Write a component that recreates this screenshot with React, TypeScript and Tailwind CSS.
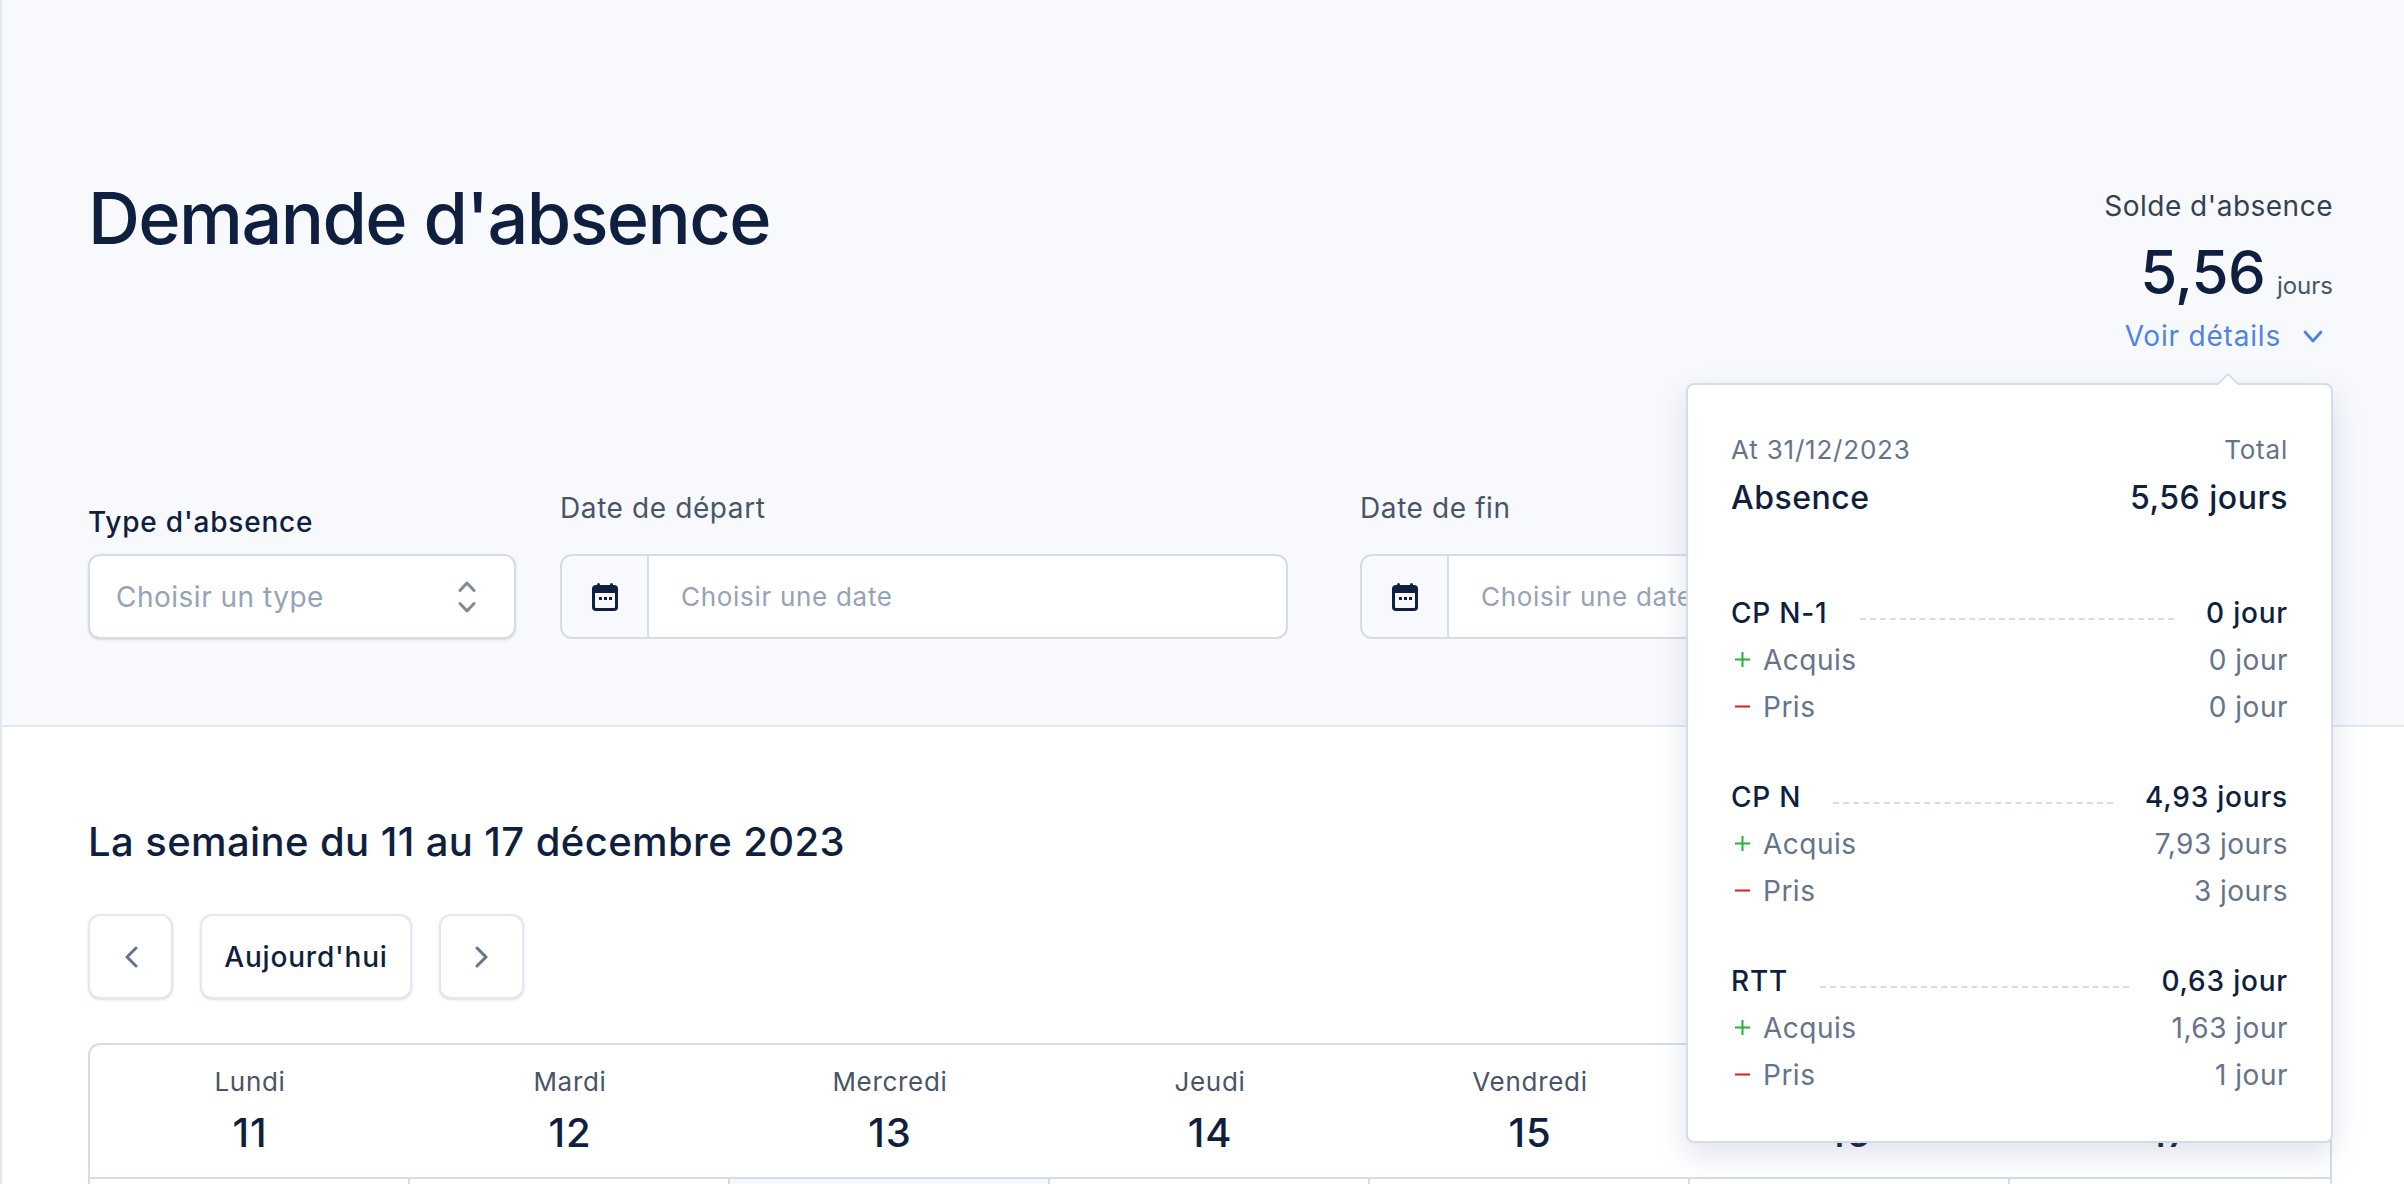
const days = [
    { name: "Lundi", num: 11 },
    { name: "Mardi", num: 12 },
    { name: "Mercredi", num: 13 },
    { name: "Jeudi", num: 14 },
    { name: "Vendredi", num: 15 },
    { name: "Samedi", num: 16 },
    { name: "Dimanche", num: 17 },
]

const balances = [
    { label: "CP N-1", total: "0 jour", acquis: "0 jour", pris: "0 jour" },
    { label: "CP N", total: "4,93 jours", acquis: "7,93 jours", pris: "3 jours" },
    { label: "RTT", total: "0,63 jour", acquis: "1,63 jour", pris: "1 jour" },
]

function CalendarIcon() {
    return (
        <svg width="26" height="28" viewBox="0 0 26 28" fill="none">
            <rect x="5" y="0" width="3" height="5" rx="1.5" fill="#0f1f40" />
            <rect x="18" y="0" width="3" height="5" rx="1.5" fill="#0f1f40" />
            <rect x="1.5" y="3.5" width="23" height="23" rx="2.5" stroke="#0f1f40" strokeWidth="3" />
            <rect x="1" y="3" width="24" height="7" fill="#0f1f40" />
            <rect x="7" y="14" width="3" height="3" fill="#0f1f40" />
            <rect x="12" y="14" width="3" height="3" fill="#0f1f40" />
            <rect x="17" y="14" width="3" height="3" fill="#0f1f40" />
        </svg>
    )
}

function UpDownIcon() {
    return (
        <svg width="18" height="32" viewBox="0 0 18 32" fill="none" stroke="#7b8a9f" strokeWidth="3" strokeLinecap="round" strokeLinejoin="round">
            <path d="M2 9.5 9 2l7 7.5" />
            <path d="M2 22.5 9 30l7-7.5" />
        </svg>
    )
}

function DownIcon() {
    return (
        <svg width="20" height="13" viewBox="0 0 20 13" fill="none" stroke="#4f83e3" strokeWidth="2.8" strokeLinecap="round" strokeLinejoin="round">
            <path d="M2 2l8 9 8-9" />
        </svg>
    )
}

function SideIcon({ dir }: { dir: "left" | "right" }) {
    return (
        <svg width="14" height="22" viewBox="0 0 14 22" fill="none" stroke="#64748b" strokeWidth="3" strokeLinecap="round" strokeLinejoin="round">
            <path d={dir === "left" ? "M12 2 3 11l9 9" : "M2 2l9 9-9 9"} />
        </svg>
    )
}

function DateField({ label }: { label: string }) {
    return (
        <div className="w-[728px]">
            <div className="text-[28px] leading-[40px] tracking-[0.6px] text-[#475569]">{label}</div>
            <div className="mt-[26px] flex h-[85px]">
                <div className="flex w-[89px] items-center justify-center rounded-l-[12px] border-2 border-[#d5dce9] bg-[#f8f9fd]">
                    <CalendarIcon />
                </div>
                <div className="flex flex-1 items-center rounded-r-[12px] border-2 border-l-0 border-[#d5dce9] bg-white pl-[32px] text-[26px] tracking-[0.7px] text-[#94a3b8]">
                    Choisir une date
                </div>
            </div>
        </div>
    )
}

function BalanceBlock({ label, total, acquis, pris }: { label: string; total: string; acquis: string; pris: string }) {
    return (
        <div className="mb-[43px] last:mb-0">
            <div className="flex h-[47px] items-center text-[28px] font-medium tracking-[0.8px] text-[#0f1f40]">
                <span>{label}</span>
                <span className="mx-[32px] mt-[12px] flex-1 border-t-2 border-dashed border-[#d5dce9]" />
                <span>{total}</span>
            </div>
            <div className="flex h-[47px] items-center justify-between text-[28px] tracking-[0.5px] text-[#64748b]">
                <span className="flex items-center">
                    <svg width="15" height="15" viewBox="0 0 15 15" className="ml-[4px] mr-[13px]" fill="none" stroke="#22b33a" strokeWidth="2">
                        <path d="M7.5 0v15M0 7.5h15" />
                    </svg>
                    Acquis
                </span>
                <span>{acquis}</span>
            </div>
            <div className="flex h-[47px] items-center justify-between text-[28px] tracking-[0.5px] text-[#64748b]">
                <span className="flex items-center">
                    <svg width="15" height="15" viewBox="0 0 15 15" className="ml-[4px] mr-[13px]" fill="none" stroke="#e0191f" strokeWidth="2">
                        <path d="M0 7.5h15" />
                    </svg>
                    Pris
                </span>
                <span>{pris}</span>
            </div>
        </div>
    )
}

export default function App() {
    return (
        <div className="relative h-[1184px] w-[2404px] overflow-hidden border-l-2 border-[#e2e8f0] bg-white font-['Inter',sans-serif] text-[#0f1f40]">
            <header className="h-[727px] border-b-2 border-[#e2e8f0] bg-[#f8f9fd] pl-[86px] pr-[71px]">
                <div className="flex justify-between pt-[178px]">
                    <h1 className="text-[72px] leading-[80px] font-medium tracking-[-1.6px]">Demande d'absence</h1>
                    <div className="mt-[8px] flex flex-col items-end">
                        <div className="text-[28px] leading-[40px] tracking-[0.5px] text-[#334155]">Solde d'absence</div>
                        <div className="mt-[10px] flex items-baseline">
                            <span className="text-[60px] leading-[72px] font-medium tracking-[-0.8px]">5,56</span>
                            <span className="ml-[12px] text-[24px] text-[#475569]">jours</span>
                        </div>
                        <div className="mt-[8px] flex items-center text-[28px] leading-[40px] tracking-[0.8px] text-[#4f83e3]">
                            Voir détails
                            <span className="ml-[22px] mr-[10px]"><DownIcon /></span>
                        </div>
                    </div>
                </div>
                <div className="mt-[132px] flex items-start">
                    <div className="mr-[44px] w-[428px] pt-[14px]">
                        <div className="text-[28px] leading-[40px] font-medium tracking-[0.8px]">Type d'absence</div>
                        <div className="mt-[12px] flex h-[85px] items-center justify-between rounded-[12px] border-2 border-[#d5dce9] bg-white pl-[26px] pr-[38px] text-[28px] tracking-[0.5px] text-[#94a3b8] shadow-sm">
                            Choisir un type
                            <UpDownIcon />
                        </div>
                    </div>
                    <div className="mr-[72px]">
                        <DateField label="Date de départ" />
                    </div>
                    <DateField label="Date de fin" />
                </div>
            </header>

            <main className="pl-[86px] pr-[72px]">
                <h2 className="pt-[89px] text-[40px] leading-[52px] font-medium tracking-[0.4px]">La semaine du 11 au 17 décembre 2023</h2>
                <div className="mt-[46px] flex gap-[27px]">
                    <button className="flex h-[85px] w-[85px] items-center justify-center rounded-[12px] border-2 border-[#e2e8f0] bg-white shadow-sm">
                        <SideIcon dir="left" />
                    </button>
                    <button className="h-[85px] w-[212px] rounded-[12px] border-2 border-[#e2e8f0] bg-white text-[28px] font-medium tracking-[0.8px] shadow-sm">
                        Aujourd'hui
                    </button>
                    <button className="flex h-[85px] w-[85px] items-center justify-center rounded-[12px] border-2 border-[#e2e8f0] bg-white shadow-sm">
                        <SideIcon dir="right" />
                    </button>
                </div>
                <div className="mt-[44px] rounded-t-[12px] border-x-2 border-t-2 border-[#d5dce9]">
                    <div className="grid h-[134px] grid-cols-7 border-b-2 border-[#d5dce9]">
                        {days.map(day => (
                            <div key={day.num} className="pt-[18px] text-center">
                                <div className="text-[26px] leading-[38px] tracking-[0.7px] text-[#475569]">{day.name}</div>
                                <div className="mt-[6px] text-[40px] leading-[52px] font-medium tracking-[0.8px]">{day.num}</div>
                            </div>
                        ))}
                    </div>
                    <div className="grid h-[20px] grid-cols-7">
                        {days.map(day => (
                            <div key={day.num} className={day.num === 13 ? "border-r-2 border-[#d5dce9] bg-[#f8f9fd]" : "border-r-2 border-[#d5dce9] last:border-r-0"} />
                        ))}
                    </div>
                </div>
            </main>

            <div className="absolute left-[1684px] top-[383px] h-[760px] w-[647px] rounded-[8px] border-2 border-[#d5dce9] bg-white px-[43px] pt-[47px] shadow-[0_12px_30px_0_rgba(100,116,160,0.2)]">
                <div className="absolute -top-[9px] left-[532px] size-[16px] rotate-45 rounded-tl-[2px] border-l-2 border-t-2 border-[#d5dce9] bg-white" />
                <div className="flex justify-between text-[26px] leading-[36px] tracking-[0.8px] text-[#64748b]">
                    <span>At 31/12/2023</span>
                    <span>Total</span>
                </div>
                <div className="mt-[8px] mb-[69px] flex justify-between text-[32px] leading-[44px] font-medium tracking-[0.5px]">
                    <span>Absence</span>
                    <span>5,56 jours</span>
                </div>
                {balances.map(item => (
                    <BalanceBlock key={item.label} {...item} />
                ))}
            </div>
        </div>
    )
}
